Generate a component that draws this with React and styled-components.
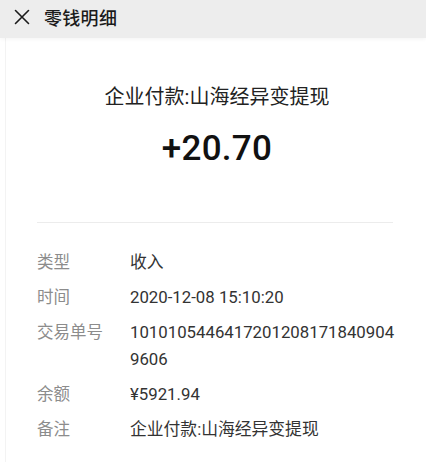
import React from "react";
import styled, { createGlobalStyle } from "styled-components";

const Global = createGlobalStyle`
  html, body { margin: 0; padding: 0; background: #ffffff; }
  body { font-family: Roboto, "Noto Sans CJK SC", sans-serif; -webkit-font-smoothing: antialiased; }
`;

const Page = styled.div`
  width: 426px;
  height: 462px;
  overflow: hidden;
  background: #fff;
  display: flex;
  flex-direction: column;
`;

const Header = styled.div`
  height: 38px;
  flex: none;
  background: #ededed;
  display: flex;
  align-items: center;
  padding: 0 0 4px 14px;
  box-sizing: border-box;
  gap: 14px;
  box-shadow: 0 1px 4px rgba(0, 0, 0, 0.05);
  position: relative;
  z-index: 1;
`;

const HeaderTitle = styled.div`
  font-size: 18px;
  font-weight: 500;
  color: #1b1b1b;
  letter-spacing: 0.3px;
`;

const Card = styled.div`
  flex: 1;
  margin-left: 5px;
  border-left: 1px solid #f3f3f3;
  display: flex;
  flex-direction: column;
  padding: 45px 0 0 0;
`;

const Top = styled.div`
  display: flex;
  flex-direction: column;
  align-items: center;
  padding-left: 2px;
`;

const Title = styled.div`
  font-size: 20px;
  line-height: 28px;
  color: #222;
`;

const Amount = styled.div`
  margin-top: 17px;
  font-size: 35px;
  line-height: 42px;
  font-weight: 500;
  color: #111;
  letter-spacing: 0.3px;
`;

const Divider = styled.div`
  height: 1px;
  background: #ececec;
  margin: 52px 33px 0 31px;
`;

const Rows = styled.div`
  display: flex;
  flex-direction: column;
  gap: 8px;
  padding: 26px 0 0 31px;
`;

const Row = styled.div`
  display: flex;
  align-items: flex-start;
`;

const Label = styled.div`
  width: 93px;
  flex: none;
  font-size: 16.5px;
  line-height: 27px;
  color: #8c8c8c;
`;

const Value = styled.div`
  width: 272px;
  font-size: 16.8px;
  line-height: 27px;
  color: #333;
  word-break: break-all;
`;

const rows = [
  ["类型", "收入"],
  ["时间", "2020-12-08 15:10:20"],
  ["交易单号", "10101054464172012081718409049606"],
  ["余额", "¥5921.94"],
  ["备注", "企业付款:山海经异变提现"],
];

export default function App() {
  return (
    <Page>
      <Global />
      <Header>
        <svg width="16" height="16" viewBox="0 0 16 16">
          <path d="M1.5 1.5 L14.5 14.5 M14.5 1.5 L1.5 14.5" stroke="#1b1b1b" strokeWidth="1.6" strokeLinecap="round" />
        </svg>
        <HeaderTitle>零钱明细</HeaderTitle>
      </Header>
      <Card>
        <Top>
          <Title>企业付款:山海经异变提现</Title>
          <Amount>+20.70</Amount>
        </Top>
        <Divider />
        <Rows>
          {rows.map(([l, v]) => (
            <Row key={l}>
              <Label>{l}</Label>
              <Value>{v}</Value>
            </Row>
          ))}
        </Rows>
      </Card>
    </Page>
  );
}
